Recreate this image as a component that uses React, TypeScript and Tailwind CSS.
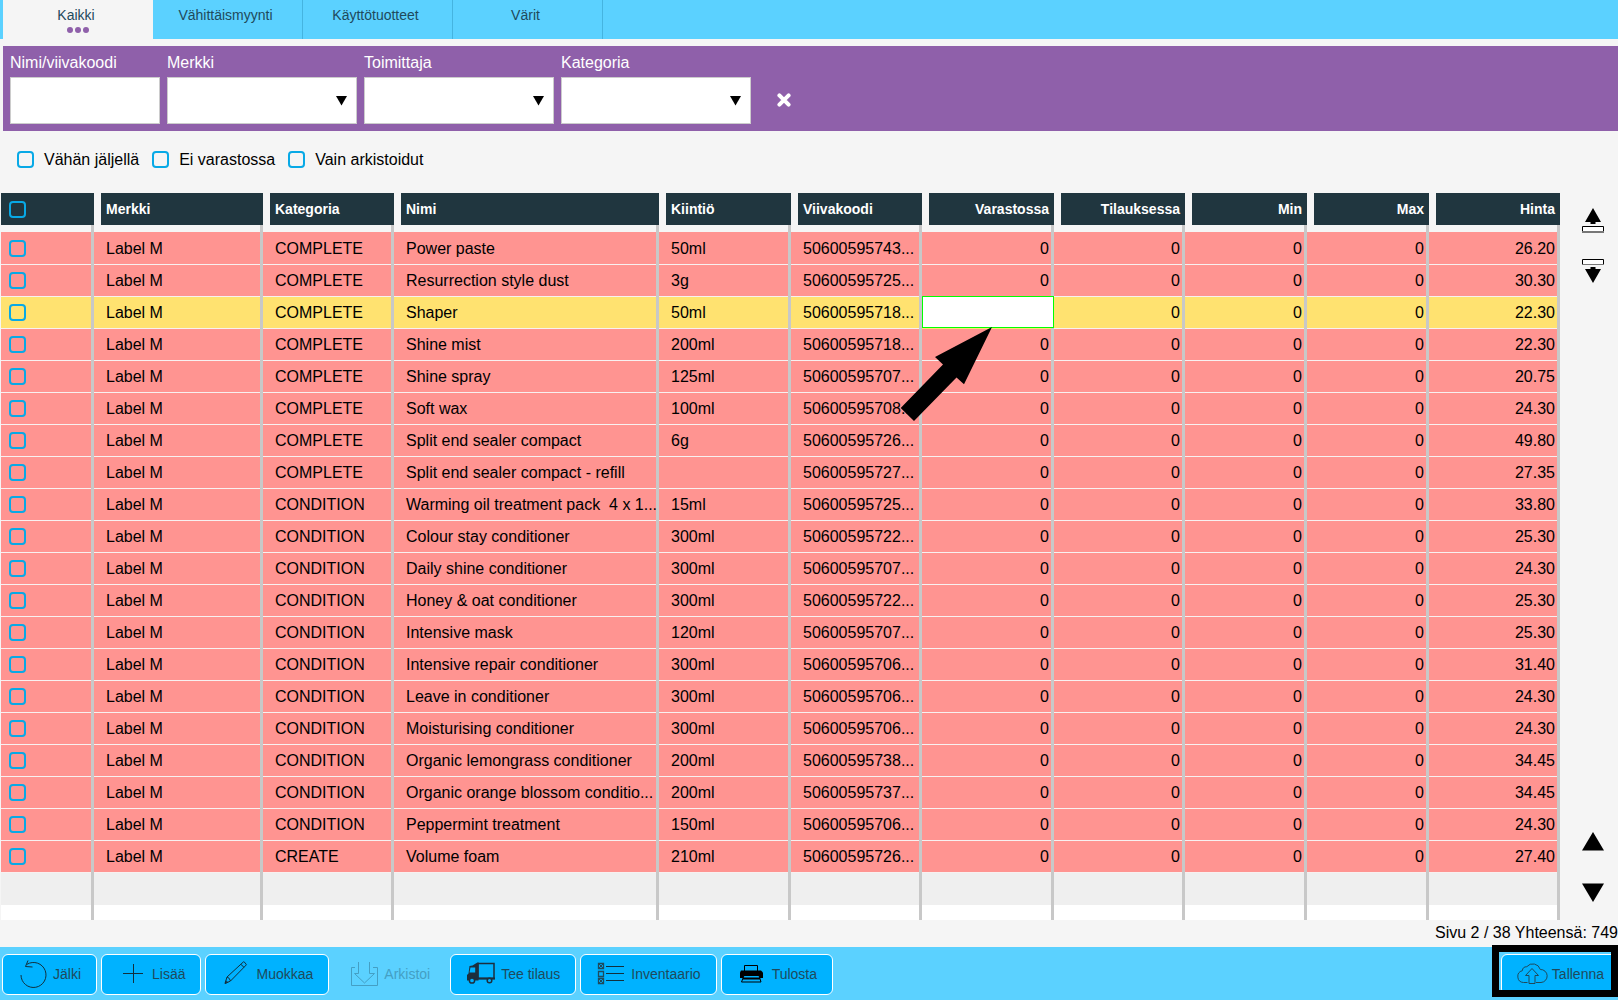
import type { ReactNode } from "react";

const tabs = ["Kaikki", "Vähittäismyynti", "Käyttötuotteet", "Värit"];

const selects = ["Merkki", "Toimittaja", "Kategoria"];

const filters = ["Vähän jäljellä", "Ei varastossa", "Vain arkistoidut"];

const textHeaders = ["Merkki", "Kategoria", "Nimi", "Kiintiö", "Viivakoodi"];
const numberHeaders = ["Varastossa", "Tilauksessa", "Min", "Max", "Hinta"];

// kategoria, nimi, kiintiö, viivakoodi, hinta
const products = [
    ["COMPLETE", "Power paste", "50ml", "50600595743...", "26.20"],
    ["COMPLETE", "Resurrection style dust", "3g", "50600595725...", "30.30"],
    ["COMPLETE", "Shaper", "50ml", "50600595718...", "22.30"],
    ["COMPLETE", "Shine mist", "200ml", "50600595718...", "22.30"],
    ["COMPLETE", "Shine spray", "125ml", "50600595707...", "20.75"],
    ["COMPLETE", "Soft wax", "100ml", "50600595708...", "24.30"],
    ["COMPLETE", "Split end sealer compact", "6g", "50600595726...", "49.80"],
    ["COMPLETE", "Split end sealer compact - refill", "", "50600595727...", "27.35"],
    ["CONDITION", "Warming oil treatment pack  4 x 1...", "15ml", "50600595725...", "33.80"],
    ["CONDITION", "Colour stay conditioner", "300ml", "50600595722...", "25.30"],
    ["CONDITION", "Daily shine conditioner", "300ml", "50600595707...", "24.30"],
    ["CONDITION", "Honey & oat conditioner", "300ml", "50600595722...", "25.30"],
    ["CONDITION", "Intensive mask", "120ml", "50600595707...", "25.30"],
    ["CONDITION", "Intensive repair conditioner", "300ml", "50600595706...", "31.40"],
    ["CONDITION", "Leave in conditioner", "300ml", "50600595706...", "24.30"],
    ["CONDITION", "Moisturising conditioner", "300ml", "50600595706...", "24.30"],
    ["CONDITION", "Organic lemongrass conditioner", "200ml", "50600595738...", "34.45"],
    ["CONDITION", "Organic orange blossom conditio...", "200ml", "50600595737...", "34.45"],
    ["CONDITION", "Peppermint treatment", "150ml", "50600595706...", "24.30"],
    ["CREATE", "Volume foam", "210ml", "50600595726...", "27.40"],
];

const selectedRow = 2;
const columns = Array.from({ length: 11 }, (_, i) => i);

const checkboxClass =
    "block size-[17px] shrink-0 appearance-none rounded-[4px] border-2 border-[#08a9e6] checked:bg-[#08a9e6]";

const Tabs = () => (
    <nav className="flex h-[39px] bg-[#5bd1ff] pl-[3px] text-sm text-[#1f4a5c]">
        {tabs.map((tab, i) => (
            <button
                key={tab}
                className={
                    i === 0
                        ? "flex w-[150px] flex-col items-center bg-[#f5f5f5] pt-[5px]"
                        : "flex w-[150px] flex-col items-center border-r border-[#45b4e0] pt-[5px]"
                }
            >
                <span className="pr-1 leading-5">{tab}</span>
                {i === 0 && (
                    <span className="flex gap-0.5 pt-0.5">
                        <span className="size-1.5 rounded-full bg-[#8f60aa]" />
                        <span className="size-1.5 rounded-full bg-[#8f60aa]" />
                        <span className="size-1.5 rounded-full bg-[#8f60aa]" />
                    </span>
                )}
            </button>
        ))}
    </nav>
);

const SearchBar = () => (
    <form className="mt-[7px] ml-[3px] flex items-end gap-[7px] bg-[#8f60aa] px-[7px] pt-[5px] pb-[7px] text-white">
        <div className="flex w-[150px] flex-col gap-0.5">
            <label htmlFor="nimi">Nimi/viivakoodi</label>
            <input id="nimi" type="text" className="h-[47px] border border-[#cccccc] bg-white px-2 text-black outline-none" />
        </div>
        {selects.map((name) => (
            <div key={name} className="flex w-[190px] flex-col gap-0.5">
                <label htmlFor={name}>{name}</label>
                <div className="relative">
                    <select
                        id={name}
                        className="block h-[47px] w-full appearance-none border border-[#cccccc] bg-white px-2 text-black outline-none"
                    />
                    <svg className="pointer-events-none absolute top-[19px] right-[10px]" width="11" height="10" viewBox="0 0 11 10">
                        <path d="M0 0h11L5.5 9.5z" fill="#000" />
                    </svg>
                </div>
            </div>
        ))}
        <button type="reset" aria-label="Tyhjennä" className="flex h-[47px] w-[52px] items-center justify-center pb-0.5">
            <svg width="14" height="14" viewBox="0 0 14 14">
                <path d="M2.4 2.4l9.2 9.2M11.6 2.4l-9.2 9.2" stroke="#fff" strokeWidth="4" strokeLinecap="round" />
            </svg>
        </button>
    </form>
);

const Filters = () => (
    <div className="mb-[5px] flex h-[57px] items-center gap-[13px] pl-[17px]">
        {filters.map((name) => (
            <label key={name} className="flex items-center gap-[10px]">
                <input type="checkbox" className={checkboxClass} />
                {name}
            </label>
        ))}
    </div>
);

const Cell = ({ children, right }: { children?: ReactNode; right?: boolean }) => (
    <td
        className={
            right
                ? "border-r-[3px] border-[#c8c8c8] pr-0.5 text-right shadow-[inset_0_-1px_0_#f8f0f0]"
                : "border-r-[3px] border-[#c8c8c8] pl-3 whitespace-pre shadow-[inset_0_-1px_0_#f8f0f0]"
        }
    >
        {children}
    </td>
);

// The cell being edited, with the arrow that points at it
const EditCell = () => (
    <td className="relative border-r-[3px] border-[#c8c8c8]">
        <input
            type="text"
            aria-label="Varastossa"
            className="absolute -top-px -right-[3px] left-0 h-8 border border-[#00ff00] bg-white px-1 text-right outline-none"
        />
        <svg className="pointer-events-none absolute top-[30px] -left-[22px] z-10" width="93" height="95" viewBox="0 0 93 95">
            <path d="M92 0L35 30l8 7.5L.7 81 14 94l42.5-43.5 7.5 6.7z" fill="#000" />
        </svg>
    </td>
);

const ProductTable = () => (
    <table className="w-full table-fixed border-separate border-spacing-0">
        <colgroup>
            <col className="w-[93px]" />
            <col className="w-[169px]" />
            <col className="w-[131px]" />
            <col className="w-[265px]" />
            <col className="w-[132px]" />
            <col className="w-[131px]" />
            <col className="w-[132px]" />
            <col className="w-[131px]" />
            <col className="w-[122px]" />
            <col className="w-[122px]" />
            <col className="w-[131px]" />
        </colgroup>
        <thead className="text-sm text-white">
            <tr>
                <th className="p-0">
                    <div className="flex h-8 items-center bg-[#20363f] pl-2">
                        <input type="checkbox" aria-label="Valitse kaikki" className={checkboxClass} />
                    </div>
                </th>
                {textHeaders.map((name) => (
                    <th key={name} className="p-0 pl-[7px] text-left">
                        <div className="h-8 bg-[#20363f] px-[5px] leading-8">{name}</div>
                    </th>
                ))}
                {numberHeaders.map((name) => (
                    <th key={name} className="p-0 pl-[7px] text-right">
                        <div className="h-8 bg-[#20363f] px-[5px] leading-8">{name}</div>
                    </th>
                ))}
            </tr>
        </thead>
        <tbody>
            <tr className="h-2">
                {columns.map((c) => (
                    <td key={c} className="border-r-[3px] border-[#c8c8c8] p-0 shadow-[inset_0_-1px_0_#ff9491]" />
                ))}
            </tr>
            {products.map(([category, name, size, barcode, price], i) => (
                <tr key={i} className={i === selectedRow ? "h-8 bg-[#ffe270]" : "h-8 bg-[#ff9491]"}>
                    <td className="border-r-[3px] border-[#c8c8c8] p-0 pb-0.5 pl-2 shadow-[inset_0_-1px_0_#f8f0f0]">
                        <input type="checkbox" aria-label={name} className={checkboxClass} />
                    </td>
                    <Cell>Label M</Cell>
                    <Cell>{category}</Cell>
                    <Cell>{name}</Cell>
                    <Cell>{size}</Cell>
                    <Cell>{barcode}</Cell>
                    {i === selectedRow ? <EditCell /> : <Cell right>0</Cell>}
                    <Cell right>0</Cell>
                    <Cell right>0</Cell>
                    <Cell right>0</Cell>
                    <Cell right>{price}</Cell>
                </tr>
            ))}
            <tr className="h-8 bg-[#efefef]">
                {columns.map((c) => (
                    <td key={c} className="border-r-[3px] border-[#c8c8c8] p-0" />
                ))}
            </tr>
            <tr className="h-[15px] bg-white">
                {columns.map((c) => (
                    <td key={c} className="border-r-[3px] border-[#c8c8c8] p-0" />
                ))}
            </tr>
        </tbody>
    </table>
);

const ScrollButtons = () => (
    <div className="flex w-[58px] shrink-0 flex-col items-center justify-between pt-[15px] pr-[8px] pb-[18px] pl-[16px]">
        <div className="flex flex-col gap-[25px]">
            <button aria-label="Ensimmäinen sivu">
                <svg className="block" width="22" height="25" viewBox="0 0 22 25">
                    <path d="M11 0l8 14h-5.500v2h-5v-2H3z" fill="#000" />
                    <path d="M.5 18.500h21v5H.5z" fill="#fff" stroke="#000" />
                    <path d="M0 24h22" stroke="#777" strokeWidth="2" />
                </svg>
            </button>
            <button aria-label="Viimeinen sivu">
                <svg className="block" width="22" height="25" viewBox="0 0 22 25">
                    <path d="M11 25l8-14h-5.500V9h-5v2H3z" fill="#000" />
                    <path d="M.5 1.500h21v5H.5z" fill="#fff" stroke="#000" />
                    <path d="M0 6.500h22" stroke="#777" strokeWidth="1" />
                </svg>
            </button>
        </div>
        <div className="flex flex-col gap-8">
            <button aria-label="Edellinen sivu">
                <svg className="block" width="22" height="19" viewBox="0 0 22 19">
                    <path d="M11 0l11 18.500H0z" fill="#000" />
                </svg>
            </button>
            <button aria-label="Seuraava sivu">
                <svg className="block" width="22" height="19" viewBox="0 0 22 19">
                    <path d="M11 19L22 .5H0z" fill="#000" />
                </svg>
            </button>
        </div>
    </div>
);

const Icon = ({ children }: { children: ReactNode }) => (
    <svg width="32" height="32" viewBox="0 0 32 32" fill="none" stroke="currentColor" className="shrink-0">
        {children}
    </svg>
);

const actions = [
    {
        label: "Jälki",
        icon: (
            <Icon>
                <g stroke="#12303d">
                    <path d="M4 17A12.500 12.500 0 1 0 10 6.300" />
                    <path d="M11 2.500L8.500 8.500l7 .5" />
                </g>
            </Icon>
        ),
    },
    {
        label: "Lisää",
        icon: (
            <Icon>
                <path d="M7 15.500h20M17.500 6v19" stroke="#12303d" />
            </Icon>
        ),
    },
    {
        label: "Muokkaa",
        icon: (
            <Icon>
                <g stroke="#12303d">
                    <path d="M5 25.500l2-6.500L23.500 3.800q1.500 0 2.900 3L10.500 23z" />
                    <path d="M7 19q2.500.5 3.500 4M20.800 6.500q2 .8 3 3M5.200 25.200l2.500-.8-1.600-1.600z" />
                </g>
            </Icon>
        ),
    },
    {
        label: "Arkistoi",
        disabled: true,
        icon: (
            <Icon>
                <path d="M10.500 4v11.500H6.500l10 9.500 10-9.500h-5V4" />
                <path d="M7 9.500H3.500v18h26v-18H25" />
            </Icon>
        ),
    },
    {
        label: "Tee tilaus",
        icon: (
            <Icon>
                <g stroke="#1c2f3e">
                    <path d="M13 5.500h16v15H13z" strokeWidth="1.500" />
                    <path d="M4.500 8l3-.5 4-2.500 2-.8V22.500H9.500a3.500 3.500 0 0 0-5 0H2v-5.500l1.500-1.500z" fill="#1c2f3e" stroke="none" />
                    <path d="M5.500 9.500h4.700v5H4.500z" fill="#00b2ff" stroke="none" />
                    <path d="M8 20.500h22" strokeWidth="2" />
                    <circle cx="7" cy="22.500" r="2.600" fill="#00b2ff" strokeWidth="1.500" />
                    <circle cx="24.500" cy="22.500" r="2.300" fill="#00b2ff" strokeWidth="1.500" />
                </g>
            </Icon>
        ),
    },
    {
        label: "Inventaario",
        icon: (
            <Icon>
                <path d="M3.500 5.500h5v5h-5zM3.500 13.500h5v5h-5zM3.500 20.500h5v5h-5z" strokeWidth="1.300" />
                <path d="M4 6l4 4M8 6l-4 4M4 21l4 4M8 21l-4 4" />
                <path d="M11 8.500h18M11 15.500h18M11 22.500h18" stroke="#12303d" />
            </Icon>
        ),
    },
    {
        label: "Tulosta",
        icon: (
            <Icon>
                <g stroke="#000">
                    <path d="M8.500 13V7.500h13V13" />
                    <path d="M5 12.500h20l2 2V20H4v-5.500z" fill="#000" stroke="none" />
                    <path d="M8 17.500h15l2 6.500H5.500z" fill="#00b2ff" />
                    <path d="M7 20.500h17" strokeWidth="2" />
                </g>
            </Icon>
        ),
    },
];

const Toolbar = () => (
    <footer className="flex h-[53px] items-start gap-1 bg-[#5bd1ff] pt-[7px] pl-0.5 text-sm text-[#1f4a5c]">
        {actions.map(({ label, icon, disabled }) => (
            <button
                key={label}
                disabled={disabled}
                className={
                    disabled
                        ? "flex h-[41px] items-center gap-1 border border-transparent pr-[15px] pb-0.5 pl-[14px] text-[#449fc4]"
                        : "flex h-[41px] items-center gap-1 rounded-md border border-white bg-[#00b2ff] pr-[15px] pb-0.5 pl-[14px]"
                }
            >
                {icon}
                <span>{label}</span>
            </button>
        ))}
        <div className="relative ml-auto">
            <button className="flex h-[41px] items-center gap-1 rounded-md border border-white bg-[#00b2ff] pr-[13px] pb-0.5 pl-[14px]">
                <Icon>
                    <path d="M11.500 24.500H7.500a6 6 0 0 1-1.200-11.800 4.500 4.500 0 0 1 4.500-4 7.800 7.800 0 0 1 13.500 2.800 6.500 6.500 0 0 1 .7 13H20" />
                    <path d="M13 25.500v-8h-3.500l6.500-7 6.500 7H19v8z" />
                </Icon>
                <span>Tallenna</span>
            </button>
            <span className="pointer-events-none absolute -top-[9px] right-0 -left-[9px] h-[52px] border-[7px] border-black" />
        </div>
    </footer>
);

const App = () => {
    return (
        <main className="flex min-h-screen flex-col bg-[#f5f5f5] font-['Liberation_Sans',Arial,sans-serif] text-base text-black">
            <Tabs />
            <SearchBar />
            <Filters />
            <section className="flex pl-px">
                <ProductTable />
                <ScrollButtons />
            </section>
            <p className="mt-auto h-[27px] pt-px text-right leading-6">Sivu 2 / 38 Yhteensä: 749</p>
            <Toolbar />
        </main>
    );
};

export default App;
